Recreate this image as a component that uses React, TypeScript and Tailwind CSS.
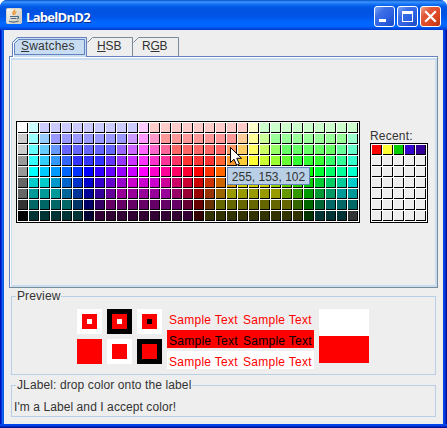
import type { ReactNode } from 'react';

type Run = [string, number];

const PALETTE: Run[][] = [
  [['fff', 1], ['cff', 1], ['ccf', 9], ['fcf', 1], ['fcc', 9], ['ffc', 1], ['cfc', 9]],
  [['ccc', 1], ['9ff', 1], ['9cf', 1], ['99f', 7], ['c9f', 1], ['f9f', 1], ['f9c', 1], ['f99', 7], ['fc9', 1], ['ff9', 1], ['cf9', 1], ['9f9', 7], ['9fc', 1]],
  [['ccc', 1], ['6ff', 1], ['6cf', 1], ['69f', 1], ['66f', 5], ['96f', 1], ['c6f', 1], ['f6f', 1], ['f6c', 1], ['f69', 1], ['f66', 5], ['f96', 1], ['fc6', 1], ['ff6', 1], ['cf6', 1], ['9f6', 1], ['6f6', 5], ['6f9', 1], ['6fc', 1]],
  [['999', 1], ['3ff', 1], ['3cf', 1], ['39f', 1], ['36f', 1], ['33f', 3], ['63f', 1], ['93f', 1], ['c3f', 1], ['f3f', 1], ['f3c', 1], ['f39', 1], ['f36', 1], ['f33', 3], ['f63', 1], ['f93', 1], ['fc3', 1], ['ff3', 1], ['cf3', 1], ['9f3', 1], ['6f3', 1], ['3f3', 3], ['3f6', 1], ['3f9', 1], ['3fc', 1]],
  [['999', 1], ['0ff', 1], ['0cf', 1], ['09f', 1], ['06f', 1], ['03f', 1], ['00f', 1], ['30f', 1], ['60f', 1], ['90f', 1], ['c0f', 1], ['f0f', 1], ['f0c', 1], ['f09', 1], ['f06', 1], ['f03', 1], ['f00', 1], ['f30', 1], ['f60', 1], ['f90', 1], ['fc0', 1], ['ff0', 1], ['cf0', 1], ['9f0', 1], ['6f0', 1], ['3f0', 1], ['0f0', 1], ['0f3', 1], ['0f6', 1], ['0f9', 1], ['0fc', 1]],
  [['666', 1], ['0cc', 2], ['09c', 1], ['06c', 1], ['03c', 1], ['00c', 1], ['30c', 1], ['60c', 1], ['90c', 1], ['c0c', 3], ['c09', 1], ['c06', 1], ['c03', 1], ['c00', 1], ['c30', 1], ['c60', 1], ['c90', 1], ['cc0', 3], ['9c0', 1], ['6c0', 1], ['3c0', 1], ['0c0', 1], ['0c3', 1], ['0c6', 1], ['0c9', 1], ['0cc', 1]],
  [['666', 1], ['099', 3], ['069', 1], ['039', 1], ['009', 1], ['309', 1], ['609', 1], ['909', 5], ['906', 1], ['903', 1], ['900', 1], ['930', 1], ['960', 1], ['990', 5], ['690', 1], ['390', 1], ['090', 1], ['093', 1], ['096', 1], ['099', 2]],
  [['333', 1], ['066', 4], ['036', 1], ['006', 1], ['306', 1], ['606', 7], ['603', 1], ['600', 1], ['630', 1], ['660', 7], ['360', 1], ['060', 1], ['063', 1], ['066', 3]],
  [['000', 1], ['033', 5], ['003', 1], ['303', 9], ['300', 1], ['330', 9], ['030', 1], ['033', 3], ['333', 1]],
];

const swatches = PALETTE.flatMap((row) => row.flatMap(([c, n]) => Array<string>(n).fill('#' + c)));
const recent = ['#f00', '#ff3', '#0c0', '#30c', '#309', ...Array<string>(30).fill('#eee')];

function Cells({ colors }: { colors: string[] }) {
  return (
    <>
      {colors.map((c, i) => (
        <div key={i} className="size-[10px] border-r border-b border-black" style={{ backgroundColor: c }} />
      ))}
    </>
  );
}

function Caption({ children }: { children: ReactNode }) {
  return <span className="absolute -top-[8px] left-[4px] bg-[#eee] px-px leading-[14px] tracking-[0.11px] whitespace-nowrap">{children}</span>;
}

function Nested({ outer, mid, inner }: { outer: string; mid: string; inner: string }) {
  return (
    <div className={`flex size-[25px] items-center justify-center ${outer}`}>
      <div className={`flex size-[15px] items-center justify-center ${mid}`}>
        <div className={`size-[5px] ${inner}`} />
      </div>
    </div>
  );
}

function SampleRow({ className }: { className: string }) {
  return (
    <div className={`flex h-[18px] items-center gap-[5px] pt-[3px] pl-[2px] tracking-[0.27px] whitespace-nowrap ${className}`}>
      <span className="w-[69px]">Sample Text</span>
      <span>Sample Text</span>
    </div>
  );
}

function WindowButton({ kind }: { kind: 'min' | 'max' | 'close' }) {
  const tone =
    kind === 'close'
      ? 'bg-[linear-gradient(135deg,#f0a58c_0%,#e2583a_30%,#dc4520_70%,#b93412_100%)]'
      : 'bg-[linear-gradient(135deg,#7ba4f4_0%,#3d6fe8_30%,#2b5fe0_65%,#1a48c2_100%)]';
  return (
    <div className={`size-[21px] rounded-[3px] border border-white ${tone}`}>
      <svg width="19" height="19" viewBox="0 0 19 19" fill="none">
        {kind === 'min' && <rect x="4" y="12" width="7" height="3" fill="#fff" />}
        {kind === 'max' && <path d="M4 4h11v11H4zM5 7v7h9V7z" fill="#fff" fillRule="evenodd" />}
        {kind === 'close' && <path d="M5 5l9 9M14 5l-9 9" stroke="#fff" strokeWidth="2.2" strokeLinecap="square" />}
      </svg>
    </div>
  );
}

function JavaIcon() {
  return (
    <svg width="16" height="16" viewBox="0 0 16 16" fill="none">
      <defs>
        <linearGradient id="tile" x1="0" y1="0" x2="1" y2="1">
          <stop offset="0" stopColor="#fbfaf6" />
          <stop offset="1" stopColor="#c9c5b6" />
        </linearGradient>
      </defs>
      <rect x=".5" y=".5" width="15" height="15" rx="1" fill="url(#tile)" stroke="#d8d4c6" />
      <path d="M8.500 1.500c1 1.700-2.500 2.300-1.500 4.200l.8 1.200M10.500 3.500c-2 1-2.200 1.800-1.200 3.200" stroke="#ee8a22" strokeWidth="1.300" />
      <path d="M4 8.500h6.500M4.500 10.500h5.500M3 13.300c2.500.9 6.500.9 9.500-.3M10.500 8.500c3-.6 2.500 2 .3 2.500" stroke="#4b6b86" strokeWidth="1.200" />
    </svg>
  );
}

export default function App() {
  return (
    <div className="h-[428px] w-[447px] bg-white font-['Liberation_Sans',Arial,sans-serif] text-[12px] text-[#333]">
      <div className="flex h-full flex-col overflow-hidden rounded-t-[7px] bg-[#0046e0]">
        <header className="flex h-[30px] shrink-0 items-start bg-[linear-gradient(to_bottom,#0450c8_0px,#3f96ff_2px,#1674f6_4px,#0058e6_7px,#0052e0_12px,#0056ea_17px,#0066fc_22px,#0066ff_26px,#0050e8_28px,#0039cc_30px)] pt-[6px] pr-[6px] pl-[6px]">
          <div className="mt-[2px]"><JavaIcon /></div>
          <h1 className="mt-[1px] ml-[4px] grow font-['Open_Sans','Noto_Sans',sans-serif] text-[13px] leading-[20px] font-bold tracking-[-0.7px] text-white [text-shadow:1px_1px_0_#0b2f9a]">LabelDnD2</h1>
          <div className="flex gap-[2px]">
            <WindowButton kind="min" />
            <WindowButton kind="max" />
            <WindowButton kind="close" />
          </div>
        </header>

        <div className="flex grow bg-[linear-gradient(to_right,#0010b8_0px,#0010b8_1px,#0038dc_1px,#0038dc_2px,#1464f0_2px,#0c58e8_4px,#0044e8_4px,#0044e8_444px,#0040dc_445px,#0010a0_446px,#000c90_447px)] px-[4px]">
          <main className="flex grow flex-col bg-[#eee] px-[5px] pt-[7px]">
            <nav className="relative z-10 flex h-[20px] pl-[3px] leading-[19px]">
              <svg className="absolute top-0 left-0" width="180" height="20" fill="none">
                <path d="M3 20V5l5-5h70v20z" fill="#c8ddf2" />
                <path d="M3.500 20V5.500l5-5h69V20" stroke="#6382bf" />
                <path d="M4.500 20V6l4-4" stroke="#fff" />
                <path d="M5.500 17.500V6.500l4-4h66v15z" stroke="#6382bf" />
                <path d="M78.500 5.500l5-5h40V19M124.500 5.500l5-5h40V19" stroke="#7a8a99" />
              </svg>
              <span className="relative ml-[9px] w-[76px] tracking-[0.2px]"><u className="underline-offset-1">S</u>watches</span>
              <span className="relative w-[45px] tracking-[-0.1px]"><u className="underline-offset-1">H</u>SB</span>
              <span className="relative tracking-[-0.2px]">R<u className="underline-offset-1">G</u>B</span>
            </nav>
            <section className="-mt-px h-[232px] w-[429px] border border-[#6382bf] border-r-[#7a8a99] border-b-[#7a8a99]">
              <div className="h-full border-t border-l border-white">
                <div className="flex h-full items-start border-x-[2px] border-y-[2px] border-l-[1px] border-[#c8ddf2] pt-[61px] pl-[4px]">
                  <div className="relative grid w-[344px] shrink-0 grid-cols-[repeat(31,10px)] gap-px border border-black bg-white p-px">
                    <Cells colors={swatches} />
                    <div className="absolute top-[45px] left-[210px] flex h-[18px] w-[83px] items-center justify-center border border-[#6382bf] bg-[#b8cfe5] pt-px whitespace-nowrap">255, 153, 102</div>
                    <svg className="absolute top-[24px] left-[212px]" width="14" height="21" viewBox="0 0 14 21">
                      <path d="M1.500 1.500v15l3.500-3.300 2.600 6 2.800-1.200-2.600-5.700h4.700z" fill="#fff" stroke="#000" />
                    </svg>
                  </div>
                  <div className="mt-[7px] ml-[10px]">
                    <div className="h-[15px] leading-[16px] tracking-[0.2px]">Recent:</div>
                    <div className="grid w-[58px] grid-cols-[repeat(5,10px)] gap-px border border-black bg-white p-px">
                      <Cells colors={recent} />
                    </div>
                  </div>
                </div>
              </div>
            </section>

            <section className="relative mt-[8px] ml-[2px] flex h-[79px] w-[425px] items-start border border-[#b8cfe5] pt-[12px] pl-[65px]">
              <Caption>Preview</Caption>
              <div className="grid grid-cols-[repeat(3,25px)] gap-[5px]">
                <Nested outer="bg-white" mid="bg-[#f00]" inner="bg-white" />
                <Nested outer="bg-black" mid="bg-[#f00]" inner="bg-white" />
                <Nested outer="bg-white" mid="bg-[#f00]" inner="bg-black" />
                <Nested outer="bg-[#f00]" mid="bg-[#f00]" inner="bg-[#f00]" />
                <Nested outer="bg-white" mid="bg-[#f00]" inner="bg-[#f00]" />
                <Nested outer="bg-black" mid="bg-[#f00]" inner="bg-[#f00]" />
              </div>
              <div className="ml-[5px] flex w-[147px] flex-col gap-[3px]">
                <SampleRow className="text-[#f00]" />
                <SampleRow className="bg-[#f00] text-black" />
                <SampleRow className="bg-white text-[#f00]" />
              </div>
              <div className="ml-[5px] w-[50px]">
                <div className="h-[27px] bg-white" />
                <div className="h-[27px] bg-[#f00]" />
              </div>
            </section>

            <section className="relative mt-[10px] ml-[2px] h-[32px] w-[425px] border border-[#b8cfe5] pt-[13px] pl-[2px]">
              <Caption>JLabel: drop color onto the label</Caption>
              <div className="leading-[16px] tracking-[0.08px]">I'm a Label and I accept color!</div>
            </section>
          </main>
        </div>
        <footer className="h-[4px] shrink-0 bg-[linear-gradient(to_bottom,#0046f0_0px,#0040e0_2px,#0010a0_3px,#000c90_4px)]" />
      </div>
    </div>
  );
}
